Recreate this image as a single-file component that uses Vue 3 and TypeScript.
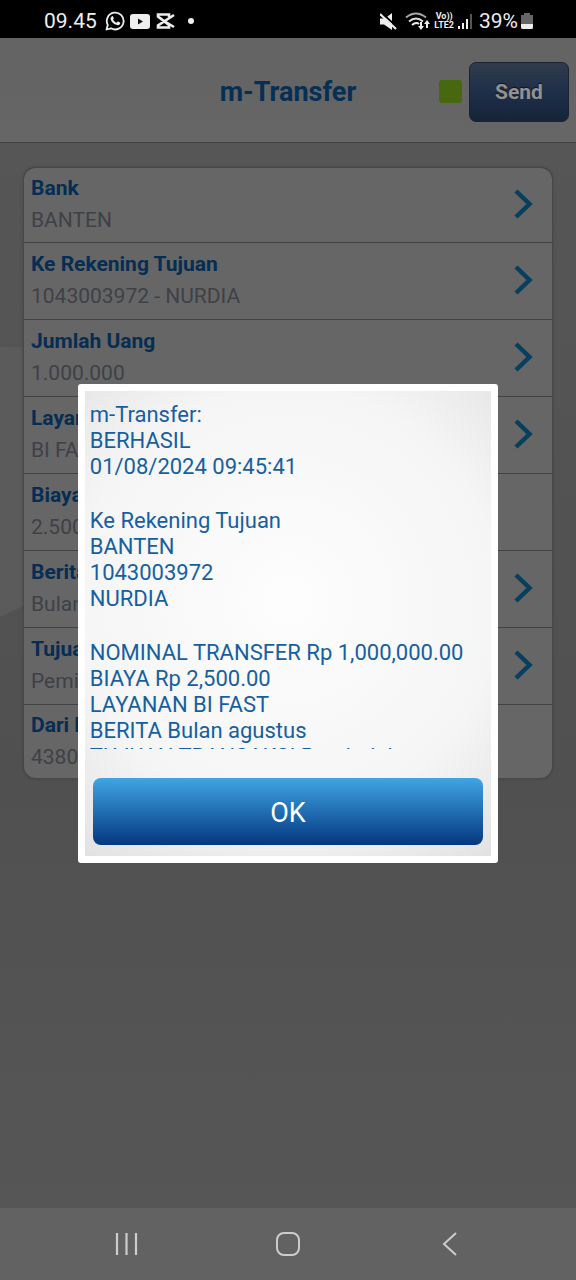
<script setup lang="ts">
import { ref } from 'vue'

interface Field {
  label: string
  value: string
  link: boolean
}

const fields: Field[] = [
  { label: 'Bank', value: 'BANTEN', link: true },
  { label: 'Ke Rekening Tujuan', value: '1043003972 - NURDIA', link: true },
  { label: 'Jumlah Uang', value: '1.000.000', link: true },
  { label: 'Layanan', value: 'BI FAST', link: true },
  { label: 'Biaya', value: '2.500', link: false },
  { label: 'Berita', value: 'Bulan agustus', link: true },
  { label: 'Tujuan Transaksi', value: 'Pemindahan', link: true },
  { label: 'Dari Rekening', value: '4380', link: false },
]

const receipt: string[][] = [
  ['m-Transfer:', 'BERHASIL', '01/08/2024 09:45:41'],
  ['Ke Rekening Tujuan', 'BANTEN', '1043003972', 'NURDIA'],
  [
    'NOMINAL TRANSFER Rp 1,000,000.00',
    'BIAYA Rp 2,500.00',
    'LAYANAN BI FAST',
    'BERITA Bulan agustus',
    'TUJUAN TRANSAKSI Pemindahan',
  ],
]

const open = ref(true)
</script>

<template>
  <div class="screen">
    <div class="status">
      <div class="status-side">
        <span class="clock">09.45</span>
        <svg width="20" height="20" viewBox="0 0 20 20" aria-hidden="true">
          <path d="M1.5 18.5 2.8 14A8.4 8.4 0 1 1 6 17.3Z" fill="none" stroke="#eee" stroke-width="1.8" stroke-linejoin="round" />
          <path d="M6.9 5.2c.5-.3 1-.1 1.2.4l.7 1.6c.1.4-.5 1-.8 1.4.8 1.6 1.9 2.5 3.5 3.2l1-1.1c.3-.3.6-.2 1 0l1.5.8c.5.3.2 1.3-.2 1.8-.9 1-2.3 1-3.6.5C8.500 12.800 6.500 11 5.700 8.500c-.4-1.300.2-2.600 1.200-3.300Z" fill="#eee" />
        </svg>
        <svg width="20" height="15" viewBox="0 0 20 15" aria-hidden="true">
          <rect width="20" height="15" rx="3" fill="#eee" />
          <path d="M8 4.500v6l5-3Z" fill="#111" />
        </svg>
        <svg width="20" height="16" viewBox="0 0 20 16" aria-hidden="true">
          <path d="M19 2 3 12.500V14.500H14V12L3 3.500V1.500H14V4" fill="none" stroke="#eee" stroke-width="2.600" />
          <path d="M9 8 19 14" stroke="#eee" stroke-width="2.600" />
        </svg>
        <svg class="dot" width="6" height="6" viewBox="0 0 6 6" aria-hidden="true"><circle cx="3" cy="3" r="3" fill="#eee" /></svg>
      </div>
      <div class="status-side right">
        <svg width="17" height="17" viewBox="0 0 17 17" aria-hidden="true">
          <path d="M0 5.500v6h4L12 17V0L5 5.500Z" fill="#eee" />
          <path d="M2 0 17 14" stroke="#000" stroke-width="2" />
          <path d="M0 1 16 16" stroke="#eee" stroke-width="2.200" />
        </svg>
        <svg class="wifi" width="26" height="18" viewBox="0 0 26 18" aria-hidden="true">
          <g fill="none" stroke-width="2">
            <path d="M1 5.500Q11-2.500 21 5.500" stroke="#aaa" />
            <path d="M4 9.500Q11 3.500 18 9.500" stroke="#ddd" />
            <path d="M7 13Q11 9.500 14 12" stroke="#eee" />
          </g>
          <path d="M15 10v4h-2l3 4 3-4h-2v-4ZM21 16v-4h-2l3-4 3 4h-2v4Z" fill="#eee" />
        </svg>
        <span class="lte"><span>Vo))</span><span>LTE2</span></span>
        <svg width="15" height="15" viewBox="0 0 15 15" aria-hidden="true">
          <path d="M1 12h2v3H1ZM5 9h2v6H5ZM9 5h2v10H9Z" fill="#eee" />
          <path d="M13 0h2v15h-2Z" fill="#555" />
        </svg>
        <span class="percent">39%</span>
        <svg width="12" height="16" viewBox="0 0 12 16" aria-hidden="true">
          <path d="M3 0h6v2h3v14H0V2h3Z" fill="#666" />
          <path d="M0 11h12v3a2 2 0 0 1-2 2H2a2 2 0 0 1-2-2Z" fill="#eee" />
        </svg>
      </div>
    </div>

    <header class="header">
      <h1>m-Transfer</h1>
      <div class="actions">
        <span class="signal"></span>
        <button class="send" type="button">Send</button>
      </div>
    </header>

    <main class="body">
      <svg class="backdrop" viewBox="0 0 576 1065" preserveAspectRatio="none" aria-hidden="true">
        <defs>
          <linearGradient id="sweep">
            <stop offset="0" stop-color="#5b5b5b" />
            <stop offset="1" stop-color="#545454" />
          </linearGradient>
        </defs>
        <path d="M0 204H24L576 204V260Q300 330 0 474Z" fill="url(#sweep)" />
      </svg>
      <ul class="card">
        <li v-for="f in fields" :key="f.label" class="row">
          <div>
            <div class="label">{{ f.label }}</div>
            <div class="value">{{ f.value }}</div>
          </div>
          <svg v-if="f.link" width="20" height="30" viewBox="0 0 20 30" aria-hidden="true">
            <path d="M2 2 15.500 15 2 28" fill="none" stroke="#073f5e" stroke-width="4.500" />
          </svg>
        </li>
      </ul>
    </main>

    <nav class="nav">
      <button type="button" aria-label="Recents">
        <svg width="24" height="24" viewBox="0 0 24 24"><path d="M3 1v22M12.500 1v22M22 1v22" stroke="#ccc" stroke-width="2.200" /></svg>
      </button>
      <button type="button" aria-label="Home">
        <svg width="24" height="24" viewBox="0 0 24 24"><rect x="1" y="1" width="22" height="22" rx="7" fill="none" stroke="#ccc" stroke-width="2" /></svg>
      </button>
      <button type="button" aria-label="Back">
        <svg width="24" height="24" viewBox="0 0 24 24"><path d="M18 1 6 12l12 11" fill="none" stroke="#ccc" stroke-width="2" /></svg>
      </button>
    </nav>

    <div v-if="open" class="overlay">
      <section class="dialog" role="dialog" aria-label="m-Transfer">
        <div class="receipt">
          <div v-for="(group, i) in receipt" :key="i">
            <div v-for="line in group" :key="line">{{ line }}</div>
          </div>
        </div>
        <button class="ok" type="button" @click="open = false">OK</button>
      </section>
    </div>
  </div>
</template>

<style>
body {
  margin: 0;
}
</style>

<style scoped>
.screen {
  position: relative;
  display: flex;
  flex-direction: column;
  min-height: 100vh;
  font-family: Roboto, 'Liberation Sans', sans-serif;
  background: #555;
}
.status {
  display: flex;
  justify-content: space-between;
  align-items: center;
  height: 38px;
  padding: 4px 43px 0 44px;
  box-sizing: border-box;
  background: #000;
  color: #eee;
}
.status-side {
  display: flex;
  align-items: center;
  gap: 5px;
}
.clock,
.percent {
  font-size: 21px;
  line-height: 24px;
}
.clock {
  margin-right: 3px;
}
.dot {
  margin-left: 8px;
}
.right {
  gap: 3px;
}
.wifi {
  margin-left: 5px;
}
.lte {
  display: flex;
  flex-direction: column;
  align-items: center;
  font-size: 9px;
  font-weight: 700;
  line-height: 9px;
}
.percent {
  margin-left: 4px;
}
.header {
  display: grid;
  grid-template-columns: 1fr auto 1fr;
  align-items: center;
  height: 105px;
  box-sizing: border-box;
  padding: 3px 7px 0;
  border-bottom: 1px solid #424242;
  background: linear-gradient(#636363, #666);
}
h1 {
  grid-column: 2;
  margin: 0;
  font-size: 27px;
  line-height: 32px;
  font-weight: 700;
  color: #062f54;
}
.actions {
  display: flex;
  justify-content: flex-end;
  align-items: center;
  gap: 7px;
}
.signal {
  width: 23px;
  height: 23px;
  border-radius: 3px;
  background: #47680f;
}
.send {
  width: 100px;
  height: 60px;
  border: 1px solid #1b2433;
  border-radius: 7px;
  background: linear-gradient(#303c4c, #1f2f49 50%, #162439);
  color: #929292;
  font: 700 21px/24px Roboto, 'Liberation Sans', sans-serif;
  text-shadow: 0 -1px 1px #111;
}
.body {
  position: relative;
  flex: 1;
  padding: 25px 24px;
  background: linear-gradient(#565656, #505050 60%, #565656);
}
.backdrop {
  position: absolute;
  inset: 0;
  width: 100%;
  height: 100%;
}
.card {
  position: relative;
  margin: 0;
  padding: 0;
  list-style: none;
  border-radius: 12px;
  background: #666;
  box-shadow: 0 0 0 1px #484848, 0 0 3px 1px #444;
}
.row {
  display: flex;
  justify-content: space-between;
  align-items: center;
  height: 77px;
  box-sizing: border-box;
  padding: 0 18px 2px 7px;
  border-bottom: 1px solid #434343;
}
.row:first-child {
  height: 75px;
}
.row:last-child {
  height: 73px;
  border-bottom: 0;
}
.label,
.value {
  font-size: 21px;
  line-height: 32px;
}
.label {
  font-weight: 700;
  color: #062d52;
}
.value {
  color: #3e4146;
}
.nav {
  display: flex;
  justify-content: space-around;
  align-items: center;
  height: 72px;
  padding: 0 45px;
  background: #626262;
}
.nav button {
  width: 48px;
  height: 48px;
  padding: 0;
  border: 0;
  background: none;
}
.nav svg {
  display: block;
  margin: auto;
}
.overlay {
  position: absolute;
  inset: 38px 0 72px;
  display: flex;
  align-items: center;
  justify-content: center;
}
.dialog {
  width: 73%;
  box-sizing: border-box;
  padding: 11px 8px 11px 5px;
  border: 7px solid #fff;
  border-radius: 3px;
  background: radial-gradient(circle at 50% 45%, #fdfdfd 0, #f5f5f5 65%, #e2e2e2 100%);
}
.receipt {
  display: flex;
  flex-direction: column;
  gap: 28px;
  height: 347px;
  overflow: hidden;
  white-space: nowrap;
  font-size: 22px;
  line-height: 26px;
  color: #165f9f;
}
.ok {
  display: block;
  width: calc(100% - 3px);
  height: 67px;
  margin: 29px 0 0 3px;
  padding-top: 4px;
  border: 0;
  border-radius: 8px;
  background: linear-gradient(#3fa5e4, #04377f);
  color: #fff;
  font: 400 27px/32px Roboto, 'Liberation Sans', sans-serif;
}
</style>
